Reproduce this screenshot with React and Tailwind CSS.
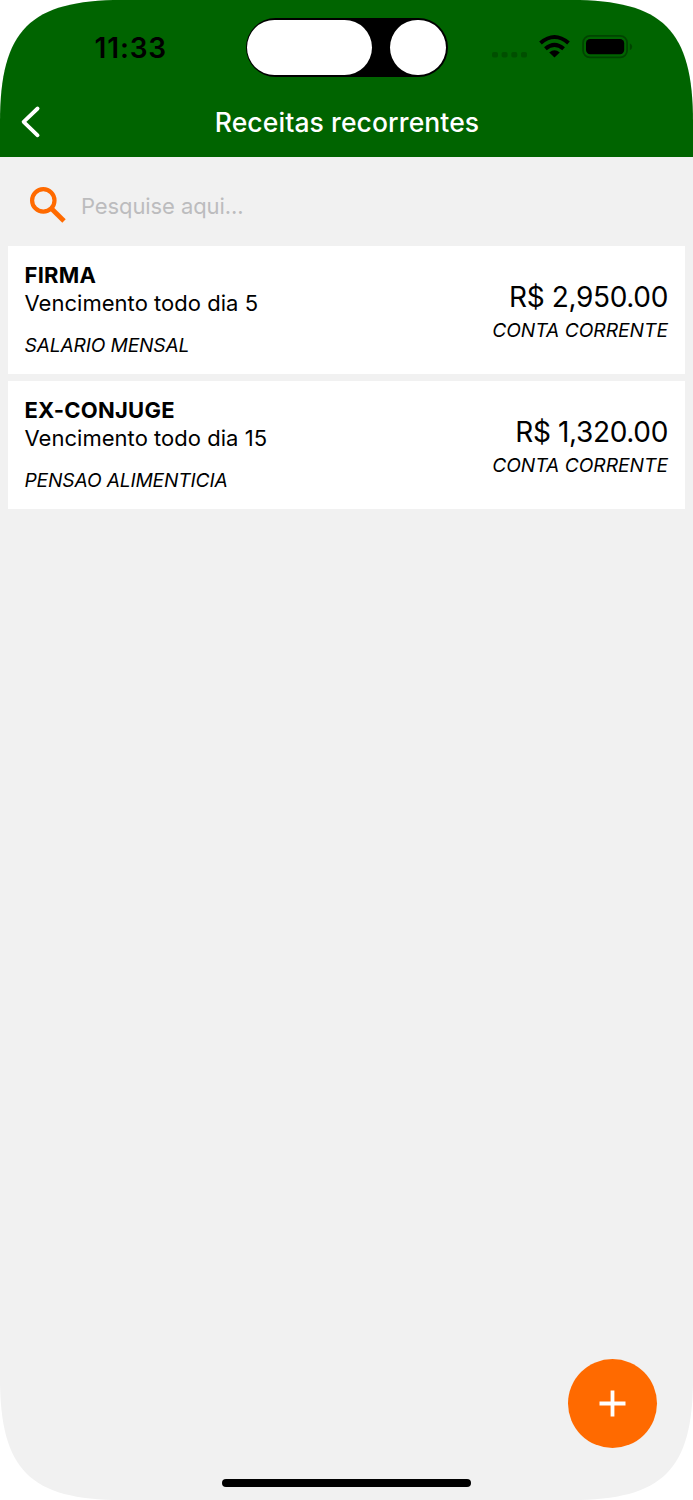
const ENTRIES = [
  { name: 'FIRMA', due: 'Vencimento todo dia 5', category: 'SALARIO MENSAL', amount: 'R$ 2,950.00', account: 'CONTA CORRENTE' },
  { name: 'EX-CONJUGE', due: 'Vencimento todo dia 15', category: 'PENSAO ALIMENTICIA', amount: 'R$ 1,320.00', account: 'CONTA CORRENTE' },
];

function StatusBar() {
  return (
    <div className="grid h-[94px] grid-cols-[245.5px_202px_1fr] items-start pt-[18px]">
      <div className="flex h-[59px] items-center pl-[94.5px]">
        <span className="text-[28px] leading-[34px] font-semibold tracking-[0.85px] text-black">11:33</span>
      </div>
      <div className="flex h-[59px] items-center justify-between rounded-full bg-black px-[1.5px]">
        <span className="h-[55.6px] w-[125px] rounded-full bg-white" />
        <span className="h-[55.6px] w-[55.6px] rounded-full bg-white" />
      </div>
      <svg className="mt-[12px] ml-[42.5px] h-[34px] w-[146px]" viewBox="490 30 146 34">
        <g fill="#004f00">
          <rect x="492" y="52" width="6" height="5.6" rx="1.8" />
          <rect x="501.6" y="52" width="6" height="5.6" rx="1.8" />
          <rect x="511.3" y="52" width="6" height="5.6" rx="1.8" />
          <rect x="521" y="52" width="6" height="5.6" rx="1.8" />
        </g>
        <path d="M554.5 57.6 L549.2 52.4 Q554.5 48 559.8 52.4 Z" fill="#000" />
        <g fill="none" stroke="#000" strokeWidth="4">
          <path d="M545.4 48.8 Q554.5 40.8 563.6 48.8" />
          <path d="M540.5 43 Q554.5 31 568.5 43" />
        </g>
        <rect x="583.1" y="35.9" width="44" height="21.4" rx="6.8" fill="none" stroke="#004400" strokeWidth="1.8" />
        <rect x="586" y="39" width="38.2" height="15.2" rx="4.2" fill="#000" />
        <path d="M629.8 43.2 Q632.2 44.2 632.2 46.7 Q632.2 49.2 629.8 50.2 Z" fill="#004400" />
      </svg>
    </div>
  );
}

function Header() {
  return (
    <header className="h-[157px] shrink-0 bg-[#006400]">
      <StatusBar />
      <div className="grid h-[56px] grid-cols-[80px_1fr_80px] items-center">
        <button className="pl-[20px]" aria-label="Voltar">
          <svg className="h-[34px] w-[22px]" viewBox="20 105 22 34" fill="none" stroke="#fff" strokeWidth="3.8" strokeLinecap="round" strokeLinejoin="round">
            <path d="M37.6 108.5 L23.6 121.8 L37.6 135.3" />
          </svg>
        </button>
        <h1 className="pl-[1px] text-center text-[26.5px] leading-[32px] font-medium tracking-[0.1px] whitespace-nowrap text-white">Receitas recorrentes</h1>
      </div>
    </header>
  );
}

function SearchBar() {
  return (
    <div className="flex h-[89px] shrink-0 items-center pt-[8px] pl-[28px]">
      <svg className="mb-[1px] h-[40px] w-[40px]" viewBox="28 185 40 40" fill="none" stroke="#ff6a00" strokeWidth="4.2">
        <circle cx="43.3" cy="200.4" r="11.2" />
        <path d="M51.6 208.7 L64 221" strokeWidth="4.8" />
      </svg>
      <span className="ml-[13px] text-[22px] leading-[28px] tracking-[-0.1px] text-[#bcbcbe]">Pesquise aqui...</span>
    </div>
  );
}

function EntryCard({ entry }) {
  return (
    <li className="flex h-[128px] items-center justify-between bg-white pr-[17px] pl-[16.5px] text-black">
      <div className="flex flex-col pb-[1px]">
        <span className="text-[22px] leading-[27px] font-bold tracking-[0.25px]">{entry.name}</span>
        <span className="text-[22px] leading-[28px] tracking-[0.03px]">{entry.due}</span>
        <span className="mt-[16px] text-[19.2px] leading-[24px] tracking-[-0.15px] italic">{entry.category}</span>
      </div>
      <div className="flex flex-col items-end pt-[2px]">
        <span className="text-[28px] leading-[37px] tracking-[-0.35px]">{entry.amount}</span>
        <span className="text-[19.2px] leading-[28px] italic">{entry.account}</span>
      </div>
    </li>
  );
}

export default function App() {
  return (
    <div className="h-[1500px] w-[693px] bg-white font-['Inter',sans-serif]">
      <main className="relative flex h-full w-full flex-col overflow-hidden bg-[#f1f1f1] [clip-path:path('M122_0_L571_0_C663_0_693_30_693_122_L693_1378_C693_1470_663_1500_571_1500_L122_1500_C30_1500_0_1470_0_1378_L0_122_C0_30_30_0_122_0_Z')]">
        <Header />
        <SearchBar />
        <ul className="flex flex-col gap-[7.4px] px-[8px]">
          {ENTRIES.map((entry) => (
            <EntryCard key={entry.name} entry={entry} />
          ))}
        </ul>
        <button className="absolute right-[36px] bottom-[52.5px] flex h-[89px] w-[89px] items-center justify-center rounded-full bg-[#ff6a00]" aria-label="Adicionar">
          <svg className="h-[27px] w-[27px]" viewBox="0 0 27 27" stroke="#fff" strokeWidth="3.8">
            <path d="M13.5 0.5 V26.5 M0.5 13.5 H26.5" />
          </svg>
        </button>
        <div className="absolute bottom-[13px] left-[222px] h-[8px] w-[249px] rounded-full bg-black" />
      </main>
    </div>
  );
}
